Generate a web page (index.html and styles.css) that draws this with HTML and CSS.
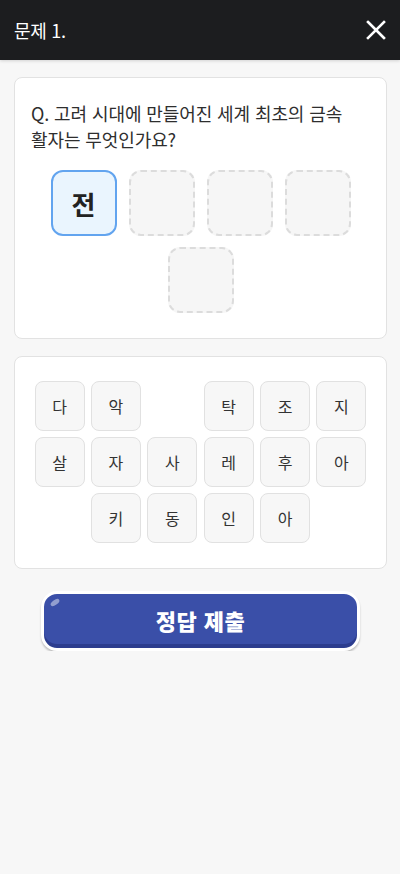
FILE: index.html
```html
<!DOCTYPE html>
<html lang="ko">
<head>
  <meta charset="UTF-8">
  <title>문제 1.</title>
  <meta name="viewport" content="width=device-width, initial-scale=1.0">
  <link rel="stylesheet" href="styles.css">
</head>
<body>

<div class="topbar">
  <span class="topbar-title">문제 1.</span>
  <button class="close-btn" aria-label="닫기">
    <svg width="20" height="20" viewBox="0 0 20 20"><path d="M2 2 L18 18 M18 2 L2 18" stroke="#fff" stroke-width="2.6" stroke-linecap="square" fill="none"/></svg>
  </button>
</div>

<div class="content">
  <!-- 문제 카드 -->
  <div class="card question-card">
    <p class="question">Q. 고려 시대에 만들어진 세계 최초의 금속 활자는 무엇인가요?</p>
    <div class="slots">
      <div class="slot filled">전</div>
      <div class="slot"></div>
      <div class="slot"></div>
      <div class="slot"></div>
      <div class="slot"></div>
    </div>
  </div>

  <!-- 글자 선택 -->
  <div class="card letters-card">
    <div class="letters">
      <button class="letter">다</button>
      <button class="letter">악</button>
      <button class="letter used">전</button>
      <button class="letter">탁</button>
      <button class="letter">조</button>
      <button class="letter">지</button>
      <button class="letter">살</button>
      <button class="letter">자</button>
      <button class="letter">사</button>
      <button class="letter">레</button>
      <button class="letter">후</button>
      <button class="letter">아</button>
      <button class="letter">키</button>
      <button class="letter">동</button>
      <button class="letter">인</button>
      <button class="letter">아</button>
    </div>
  </div>

  <div class="submit-wrap">
    <button class="submit">정답 제출</button>
  </div>
</div>

</body>
</html>
```

FILE: styles.css
```css
body {
  font-family: 'Noto Sans CJK KR', 'Noto Sans', sans-serif;
  background: #f7f7f7;
  margin: 0;
  color: #333;
}
.topbar {
  height: 60px;
  background: #1c1d1f;
  display: flex;
  align-items: center;
  justify-content: space-between;
  padding: 0 12px 0 14px;
  box-shadow: 0 1px 3px rgba(0,0,0,0.15);
}
.topbar-title {
  color: #fff;
  font-size: 18px;
  letter-spacing: -0.3px;
}
.close-btn {
  background: none;
  border: none;
  padding: 0;
  width: 24px;
  height: 24px;
  display: flex;
  align-items: center;
  justify-content: center;
  cursor: pointer;
}
.content {
  padding: 17px 13px 0 14px;
}
.card {
  background: #fff;
  border: 1px solid #e2e2e2;
  border-radius: 8px;
}
.question-card {
  padding: 22px 16px 25px 16px;
}
.question {
  margin: 0 0 18px;
  font-size: 18px;
  line-height: 26px;
  color: #2e2e2e;
  letter-spacing: -0.1px;
  word-break: keep-all;
}
.slots {
  display: flex;
  flex-wrap: wrap;
  justify-content: center;
  gap: 11px 12px;
}
.slot {
  width: 62px;
  height: 62px;
  border: 2px dashed #dcdcdc;
  border-radius: 12px;
  background: #f6f6f6;
  display: flex;
  align-items: center;
  justify-content: center;
  font-size: 26px;
  font-weight: bold;
  color: #222;
}
.slot.filled {
  border: 2px solid #62a4ef;
  background: #eaf5fe;
}
.letters-card {
  margin-top: 17px;
  padding: 24px 0 25px;
}
.letters {
  display: flex;
  flex-wrap: wrap;
  justify-content: center;
  gap: 6px 6.4px;
  padding: 0 19px;
}
.letter {
  width: 50px;
  height: 50px;
  background: #f7f7f7;
  border: 1px solid #e1e1e1;
  border-radius: 8px;
  font-family: inherit;
  font-size: 16px;
  color: #333;
  padding: 0;
}
.letter.used { visibility: hidden; }
.submit-wrap {
  padding: 22px 27px 0 27px;
}
.submit {
  position: relative;
  display: block;
  width: 100%;
  height: 60px;
  background: #3a4fa8;
  color: #fff;
  border: 3px solid #fff;
  border-radius: 16px;
  box-shadow: inset 0 -4px 0 #2c3d8e, 0 2px 2px rgba(0,0,0,0.22);
  font-family: inherit;
  font-size: 22px;
  font-weight: 900;
  letter-spacing: 0.5px;
  padding-bottom: 4px;
}
.submit::before {
  content: "";
  position: absolute;
  left: 6px;
  top: 6px;
  width: 10px;
  height: 5px;
  border-radius: 50%;
  background: rgba(255,255,255,0.45);
  transform: rotate(-35deg);
}
```
